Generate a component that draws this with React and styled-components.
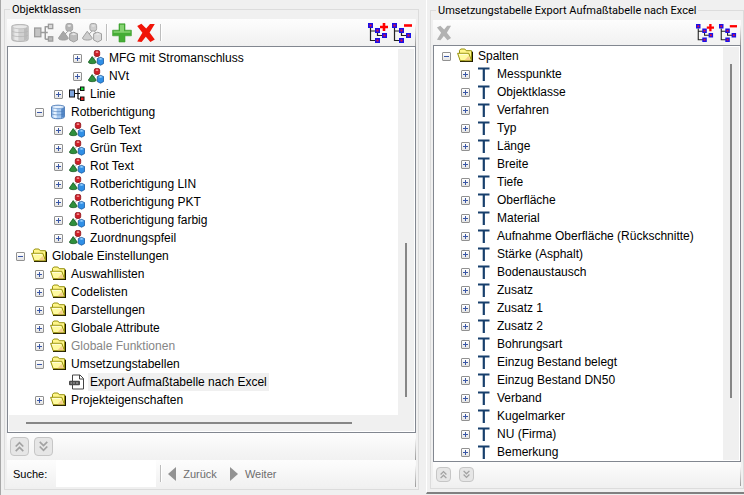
import styled, { createGlobalStyle, css } from "styled-components";

const GlobalStyle = createGlobalStyle`
  * {
    box-sizing: border-box;
  }
  body {
    margin: 0;
    background: #f0f0f0;
    color: #000;
    font: 12px/18px "Liberation Sans", Arial, sans-serif;
  }
  button,
  input {
    font: inherit;
  }
`;

const StyledWindow = styled.main`
  display: grid;
  grid-template-columns: minmax(0, 1fr) minmax(318px, 42%);
  height: 100vh;
  overflow: hidden;
`;

const StyledPane = styled.section`
  display: flex;
  min-width: 0;
  min-height: 0;
  ${(p) =>
    p.$raised
      ? css`
          margin-bottom: 1px;
          padding: 1px 0 3px 3px;
          border-left: 1px solid #fff;
          border-bottom: 2px solid #808080;
        `
      : css`
          padding: 0 7px 5px 3px;
          border-left: 1px solid #a8a8a8;
        `}
`;

const StyledFieldset = styled.fieldset`
  flex: 1;
  display: flex;
  flex-direction: column;
  min-width: 0;
  margin: 0;
  padding: 0 2px 2px;
  border: 1px solid #dcdcdc;
`;

const StyledLegend = styled.legend`
  margin-left: 3px;
  padding: 0 2px;
  font-family: Roboto, "Liberation Sans", sans-serif;
  font-size: 11px;
  line-height: 19px;
  white-space: nowrap;
`;

const StyledToolbar = styled.div`
  flex: none;
  display: flex;
  align-items: center;
  gap: ${(p) => p.$gap || 4}px;
  height: ${(p) => p.$height || 27}px;
  padding: 0 3px;
  background: linear-gradient(#fdfdfd, #f1f1f1);
  border-right: 1px solid;
  border-image: linear-gradient(#fafafa 20%, #a0a0a0 90%) 1;
`;

const StyledIconButton = styled.button`
  flex: none;
  display: grid;
  place-items: center;
  width: ${(p) => p.$size}px;
  height: ${(p) => p.$size}px;
  padding: 0;
  border: 0;
  background: none;

  svg {
    width: 100%;
    height: 100%;
  }
`;

const StyledSeparator = styled.span`
  width: 2px;
  height: 17px;
  border-left: 1px solid #bdbdbd;
  border-right: 1px solid #fff;
`;

const StyledSpacer = styled.span`
  flex: 1;
`;

const StyledTreeBox = styled.div`
  flex: 1;
  display: grid;
  grid-template-columns: minmax(0, 1fr) 16px;
  grid-template-rows: minmax(0, 1fr) auto;
  min-height: 0;
  padding: ${(p) => p.$top || 1}px 1px 1px;
  background: #fff;
  border: 1px solid #828790;
`;

const StyledTree = styled.ul`
  margin: 0;
  padding: 0;
  overflow: hidden;
  list-style: none;
`;

const StyledRow = styled.li`
  display: flex;
  align-items: center;
  height: 18px;
  padding-left: ${(p) => 7 + p.$level * 19}px;
`;

const StyledExpander = styled.button`
  flex: none;
  width: 9px;
  height: 9px;
  margin: 1px 6px 0 0;
  padding: 0;
  border: 1px solid #919191;
  border-radius: 1px;
  background:
    linear-gradient(#3a57a6, #3a57a6) center / 5px 1px no-repeat,
    ${(p) =>
      !p.$open &&
      "linear-gradient(#3a57a6, #3a57a6) center / 1px 5px no-repeat,"}
    linear-gradient(#fff, #e4e4e4);
`;

const StyledExpanderGap = styled.span`
  width: 15px;
`;

const StyledRowIcon = styled.svg`
  flex: none;
  width: 16px;
  height: 16px;
  margin-right: 3px;
`;

const StyledLabel = styled.span`
  padding: 0 2px;
  white-space: nowrap;
  color: ${(p) => (p.$disabled ? "#868686" : "#000")};
  background: ${(p) => (p.$selected ? "#f0f0f0" : "none")};
`;

const StyledScrollY = styled.div`
  display: flex;
  flex-direction: column;
  align-items: center;
  background: #f0f0f0;
`;

const StyledThumbY = styled.span`
  width: 2px;
  background: #868686;
`;

const StyledScrollX = styled.div`
  grid-column: 1 / -1;
  display: flex;
  align-items: center;
  height: 16px;
  padding-left: 17px;
  background: #f0f0f0;
`;

const StyledThumbX = styled.span`
  width: 84%;
  height: 2px;
  background: #868686;
`;

const StyledJumpButton = styled(StyledIconButton)`
  border: 1px solid #c6c6c6;
  border-radius: 4px;
  background: #e6e6e6;
`;

const StyledSearchLabel = styled.label`
  padding: 0 5px 0 3px;
  font-size: 11px;
`;

const StyledSearchInput = styled.input`
  width: 100px;
  height: 100%;
  padding: 0 4px;
  border: 0;
  background: #fff;
`;

const StyledNavButton = styled.button`
  display: flex;
  align-items: center;
  gap: 7px;
  padding: 0 7px 0 2px;
  border: 0;
  background: none;
  color: #6d6d6d;
  font-size: 11px;

  svg {
    width: 8px;
    height: 14px;
    fill: #929292;
  }
`;

function DatabaseShape({ gray }) {
  const [edge, dark, mid, light] = gray
    ? ["#b4b4b4", "#bcbcbc", "#d0d0d0", "#e8e8e8"]
    : ["#4a78b4", "#5488c8", "#a4c8f0", "#e6f2ff"];
  return (
    <>
      <path
        d="M1.5 3C1.5.6 14.5.6 14.5 3v9.8c0 2.6-13 2.6-13 0z"
        fill={mid}
        stroke={edge}
        strokeWidth="0.9"
      />
      <path d="M3.5 4.2h3.2v9.9l-3.2-.7z" fill={light} />
      <path d="M11.2 4.4 14 3.6v9.4l-2.8 1.1z" fill={dark} />
      <path
        d="M1.6 6.4c1 1.7 11.8 1.7 12.8 0M1.6 9.6c1 1.7 11.8 1.7 12.8 0"
        fill="none"
        stroke={edge}
        strokeWidth="0.6"
      />
      <ellipse cx="8" cy="3" rx="6.2" ry="1.6" fill={light} stroke={edge} strokeWidth="0.5" />
    </>
  );
}

function LineShape({ gray }) {
  const edge = gray ? "#9b9b9b" : "#111";
  return (
    <>
      <path d="M5.5 7.5H11M9 2.5v10.5M9 3h3M9 13h3" fill="none" stroke={edge} strokeWidth="1.2" />
      <rect x="0.5" y="4" width="5" height="7" fill={gray ? "#c4c4c4" : "#7fa6de"} stroke={edge} />
      <rect x="11.5" y="1" width="3.5" height="3.5" fill={gray ? "#d8d8d8" : "#19e03a"} stroke={edge} />
      <rect x="11.5" y="11" width="3.5" height="3.5" fill={gray ? "#bbb" : "#f02020"} stroke={edge} />
    </>
  );
}

function ObjectsShape({ gray, light }) {
  const red = gray ? (light ? "#cecece" : "#b4b4b4") : "#cf2028";
  const green = gray ? (light ? "#cecece" : "#a8a8a8") : "#2f8f3c";
  const blue = gray ? (light ? "#dadada" : "#bcbcbc") : "#2f8fe6";
  return (
    <>
      <path d="M8 6.5 5.5 9M10 6.5l1.5 2.5" stroke="#999" strokeWidth="0.8" />
      <rect x="6.3" y="0.4" width="5.4" height="6" rx="1.8" fill={red} stroke={gray ? "#a6a6a6" : "#8c1218"} strokeWidth="0.8" />
      <ellipse cx="9" cy="2.2" rx="1.4" ry="0.9" fill={gray ? "#e0e0e0" : "#f28a8c"} />
      <path d="M4.2 6.6 8.2 12c.2 2.2-8 2.2-7.8 0z" fill={green} stroke={gray ? "#a0a0a0" : "#14581f"} strokeWidth="0.8" />
      <path d="M9.3 8.6 12.6 7.4l3 1.2v5l-3 1.6-3.3-1.6z" fill={blue} stroke={gray ? "#a0a0a0" : "#17559c"} strokeWidth="0.8" />
      <path d="M10 8.9l2.6.9 2.4-.9-2.4-.9z" fill={gray ? "#e6e6e6" : "#9bd3ff"} />
    </>
  );
}

function FolderShape() {
  return (
    <>
      <path d="M3 14h13V4l-1.5-1v9.5H3z" fill="#1a1500" />
      <path d="M2.5 5V2.3L3.8 1h4l1.4 1.7h5.3V12.5H3.4z" fill="#fff68a" stroke="#96900c" />
      <path d="M.6 5.3h11.2l2.7 7.4H3.2z" fill="#fffaa0" stroke="#96900c" />
      <path d="M7.5 12.2 11.6 8l1.9 4.2z" fill="#f6cf8c" />
      <path d="M2 6.4h8.6" stroke="#fffde0" />
    </>
  );
}

function FileShape() {
  return (
    <>
      <path d="M3.5 1h7.5L14.5 4.5V15h-11z" fill="#fff" stroke="#444" strokeLinejoin="round" />
      <path d="M10.5 1v4h4" fill="none" stroke="#444" />
      <rect x="0" y="6.8" width="11" height="4.4" rx="1" fill="#4a4a4a" />
      <path d="M1.5 9h1.6M4.2 9h1.6M7 9h2.2" stroke="#bbb" strokeWidth="1.2" />
    </>
  );
}

function TextShape() {
  return (
    <path d="M2 2.5h11.5M7.8 2v13" stroke="#173f6c" strokeWidth="2.2" fill="none" />
  );
}

const SHAPES = {
  database: DatabaseShape,
  line: LineShape,
  objects: ObjectsShape,
  folder: FolderShape,
  file: FileShape,
  text: TextShape,
};

function PlusIcon() {
  return (
    <svg viewBox="0 0 20 20">
      <path d="M7 .8h6v6.4h6.4v5.6H13V19H7v-6.2H.6V7.2H7z" fill="#45ad35" stroke="#3a9a2c" strokeWidth="0.6" />
      <path d="M8 1.8h4v6.4h6.4v1.6H1.6V8.2H8z" fill="#86d272" />
    </svg>
  );
}

function CrossIcon({ color }) {
  return (
    <svg viewBox="0 0 20 20">
      <path
        d="M1.2 3 5.4.8l4.8 4.8L14 1h4.8l-5.2 8.6 5.2 6.8-4.4 2.6-4.6-5.2L5.6 19l-4.4-.6 5.2-8.6z"
        fill={color}
      />
    </svg>
  );
}

function HierarchyIcon({ minus }) {
  return (
    <svg viewBox="0 0 20 20">
      <path d="M2.5 5v12.5H8M3 8h5M9.5 9v3.5H15" fill="none" stroke="#222" strokeWidth="1.2" />
      {[
        [0, 0],
        [7, 5],
        [14, 10],
        [7, 15],
      ].map(([x, y]) => (
        <g key={`${x}-${y}`}>
          <rect x={x} y={y} width="5" height="5" fill="#1a10e8" />
          <rect x={x + 1.5} y={y + 1.5} width="2" height="2" fill="#e01040" />
        </g>
      ))}
      <path d={minus ? "M12 2.5h8" : "M12 4h8M16 0v8"} stroke="#f00" strokeWidth="2.6" />
    </svg>
  );
}

function ChevronsIcon({ down }) {
  return (
    <svg viewBox="0 0 18 18">
      <path
        d={down ? "M5 4l4 4 4-4M5 9l4 4 4-4" : "M5 9l4-4 4 4M5 14l4-4 4 4"}
        fill="none"
        stroke="#a2a2a2"
        strokeWidth="1.8"
      />
    </svg>
  );
}

const CLASSES = [
  { level: 3, icon: "objects", label: "MFG mit Stromanschluss" },
  { level: 3, icon: "objects", label: "NVt" },
  { level: 2, icon: "line", label: "Linie" },
  { level: 1, icon: "database", label: "Rotberichtigung", open: true },
  { level: 2, icon: "objects", label: "Gelb Text" },
  { level: 2, icon: "objects", label: "Grün Text" },
  { level: 2, icon: "objects", label: "Rot Text" },
  { level: 2, icon: "objects", label: "Rotberichtigung LIN" },
  { level: 2, icon: "objects", label: "Rotberichtigung PKT" },
  { level: 2, icon: "objects", label: "Rotberichtigung farbig" },
  { level: 2, icon: "objects", label: "Zuordnungspfeil" },
  { level: 0, icon: "folder", label: "Globale Einstellungen", open: true },
  { level: 1, icon: "folder", label: "Auswahllisten" },
  { level: 1, icon: "folder", label: "Codelisten" },
  { level: 1, icon: "folder", label: "Darstellungen" },
  { level: 1, icon: "folder", label: "Globale Attribute" },
  { level: 1, icon: "folder", label: "Globale Funktionen", disabled: true },
  { level: 1, icon: "folder", label: "Umsetzungstabellen", open: true },
  { level: 2, icon: "file", label: "Export Aufmaßtabelle nach Excel", leaf: true, selected: true },
  { level: 1, icon: "folder", label: "Projekteigenschaften" },
];

const COLUMNS = [
  { level: 0, icon: "folder", label: "Spalten", open: true },
  ...[
    "Messpunkte",
    "Objektklasse",
    "Verfahren",
    "Typ",
    "Länge",
    "Breite",
    "Tiefe",
    "Oberfläche",
    "Material",
    "Aufnahme Oberfläche (Rückschnitte)",
    "Stärke (Asphalt)",
    "Bodenaustausch",
    "Zusatz",
    "Zusatz 1",
    "Zusatz 2",
    "Bohrungsart",
    "Einzug Bestand belegt",
    "Einzug Bestand DN50",
    "Verband",
    "Kugelmarker",
    "NU (Firma)",
    "Bemerkung",
  ].map((label) => ({ level: 1, icon: "text", label })),
];

function Tree({ name, items }) {
  return (
    <StyledTree role="tree" aria-label={name}>
      {items.map((item) => {
        const Shape = SHAPES[item.icon];
        return (
          <StyledRow
            key={item.label}
            role="treeitem"
            aria-level={item.level + 1}
            aria-selected={!!item.selected}
            $level={item.level}
          >
            {item.leaf ? (
              <StyledExpanderGap />
            ) : (
              <StyledExpander
                type="button"
                aria-label={`${item.label} ${item.open ? "zuklappen" : "aufklappen"}`}
                $open={item.open}
              />
            )}
            <StyledRowIcon viewBox="0 0 16 16" aria-hidden="true">
              <Shape />
            </StyledRowIcon>
            <StyledLabel $disabled={item.disabled} $selected={item.selected}>
              {item.label}
            </StyledLabel>
          </StyledRow>
        );
      })}
    </StyledTree>
  );
}

function ToolButton({ label, size = 20, children }) {
  return (
    <StyledIconButton type="button" aria-label={label} $size={size}>
      {children}
    </StyledIconButton>
  );
}

function JumpButtons({ size }) {
  return (
    <>
      <StyledJumpButton type="button" aria-label="Nach oben" $size={size}>
        <ChevronsIcon />
      </StyledJumpButton>
      <StyledJumpButton type="button" aria-label="Nach unten" $size={size}>
        <ChevronsIcon down />
      </StyledJumpButton>
    </>
  );
}

function ClassesPane() {
  return (
    <StyledPane>
      <StyledFieldset>
        <StyledLegend>Objektklassen</StyledLegend>
        <StyledToolbar>
          <ToolButton label="Neue Datenbank">
            <svg viewBox="0 0 16 16">
              <DatabaseShape gray />
            </svg>
          </ToolButton>
          <ToolButton label="Neue Linie">
            <svg viewBox="0 0 16 16">
              <LineShape gray />
            </svg>
          </ToolButton>
          <ToolButton label="Neue Objektklasse">
            <svg viewBox="0 0 16 16">
              <ObjectsShape gray />
            </svg>
          </ToolButton>
          <ToolButton label="Neue Unterklasse">
            <svg viewBox="0 0 16 16">
              <ObjectsShape gray light />
            </svg>
          </ToolButton>
          <StyledSeparator />
          <ToolButton label="Hinzufügen">
            <PlusIcon />
          </ToolButton>
          <ToolButton label="Löschen">
            <CrossIcon color="#f01408" />
          </ToolButton>
          <StyledSeparator />
          <StyledSpacer />
          <ToolButton label="Alle aufklappen">
            <HierarchyIcon />
          </ToolButton>
          <ToolButton label="Alle zuklappen">
            <HierarchyIcon minus />
          </ToolButton>
        </StyledToolbar>
        <StyledTreeBox $top={2}>
          <Tree name="Objektklassen" items={CLASSES} />
          <StyledScrollY>
            <StyledSpacer />
            <StyledThumbY style={{ height: "42%" }} />
            <span style={{ height: "5%" }} />
          </StyledScrollY>
          <StyledScrollX>
            <StyledThumbX />
          </StyledScrollX>
        </StyledTreeBox>
        <StyledToolbar $gap={5}>
          <JumpButtons size={19} />
        </StyledToolbar>
        <StyledToolbar>
          <StyledSearchLabel htmlFor="suche">Suche:</StyledSearchLabel>
          <StyledSearchInput id="suche" type="text" />
          <StyledSeparator />
          <StyledNavButton type="button">
            <svg viewBox="0 0 8 14">
              <path d="M8 0v14L0 7z" />
            </svg>
            Zurück
          </StyledNavButton>
          <StyledNavButton type="button">
            <svg viewBox="0 0 8 14">
              <path d="M0 0v14l8-7z" />
            </svg>
            Weiter
          </StyledNavButton>
        </StyledToolbar>
      </StyledFieldset>
    </StyledPane>
  );
}

function TablePane() {
  return (
    <StyledPane $raised>
      <StyledFieldset>
        <StyledLegend>Umsetzungstabelle Export Aufmaßtabelle nach Excel</StyledLegend>
        <StyledToolbar $gap={5} $height={25}>
          <ToolButton label="Löschen" size={16}>
            <CrossIcon color="#b2b2b2" />
          </ToolButton>
          <StyledSpacer />
          <ToolButton label="Alle aufklappen" size={18}>
            <HierarchyIcon />
          </ToolButton>
          <ToolButton label="Alle zuklappen" size={18}>
            <HierarchyIcon minus />
          </ToolButton>
        </StyledToolbar>
        <StyledTreeBox>
          <Tree name="Spalten" items={COLUMNS} />
          <StyledScrollY>
            <span style={{ height: "4%" }} />
            <StyledThumbY style={{ height: "81%" }} />
          </StyledScrollY>
        </StyledTreeBox>
        <StyledToolbar $gap={8} $height={24}>
          <JumpButtons size={15} />
        </StyledToolbar>
      </StyledFieldset>
    </StyledPane>
  );
}

export default function App() {
  return (
    <>
      <GlobalStyle />
      <StyledWindow>
        <ClassesPane />
        <TablePane />
      </StyledWindow>
    </>
  );
}
